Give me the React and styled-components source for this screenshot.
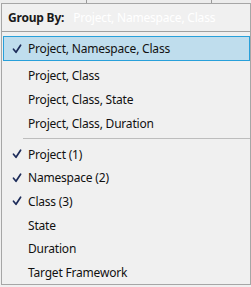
import styled, { createGlobalStyle } from "styled-components";

const GlobalStyle = createGlobalStyle`
  html, body { margin: 0; padding: 0; background: #f0f0f0; }
  body { width: 251px; height: 287px; overflow: hidden; font-family: "Noto Sans", "Open Sans", sans-serif; }
`;

const Page = styled.div`
  width: 251px;
  height: 287px;
  display: flex;
  flex-direction: column;
`;

const Backdrop = styled.div`
  height: 3px;
  display: flex;
  background: #ececec;
`;

const BackCell = styled.div`
  width: ${(p) => p.w}px;
  border-right: 1px solid ${(p) => (p.line ? "#9a9a9a" : "transparent")};
`;

const Popup = styled.div`
  margin-left: 1px;
  width: 250px;
  height: 282px;
  box-sizing: border-box;
  border: 1px solid #a6a6a6;
  background: #f0f0f0;
  display: flex;
  flex-direction: column;
  letter-spacing: -0.2px;
`;

const Header = styled.div`
  height: 28px;
  display: flex;
  align-items: center;
  padding-left: 6px;
  gap: 9px;
  border-bottom: 1px solid #a0a0a0;
  font-size: 12px;
`;

const Label = styled.span`
  font-weight: 700;
  color: #1a1a1a;
`;

const Search = styled.input`
  border: none;
  outline: none;
  background: transparent;
  font: inherit;
  font-size: 12px;
  letter-spacing: -0.2px;
  width: 160px;
  padding: 0;
  &::placeholder { color: #ffffff; opacity: 1; }
`;

const List = styled.div`
  padding-top: 4px;
  display: flex;
  flex-direction: column;
`;

const Item = styled.div`
  height: ${(p) => p.h || 24}px;
  flex-shrink: 0;
  box-sizing: border-box;
  margin: 0 0 ${(p) => (p.active ? 2 : 0)}px 1px;
  display: flex;
  align-items: center;
  font-size: 12px;
  color: #111;
  border: 1px solid ${(p) => (p.active ? "#28a0da" : "transparent")};
  background: ${(p) => (p.active ? "#bfdded" : "transparent")};
`;

const CheckBox = styled.span`
  width: 23px;
  display: flex;
  justify-content: center;
  padding-left: 1px;
`;

const Separator = styled.div`
  height: 1px;
  flex-shrink: 0;
  margin: 3px 0 3px 21px;
  background: #bdbdbd;
`;

const Check = () => (
  <svg width="10" height="10" viewBox="0 0 10 10">
    <path d="M1.5 5.2 L4 8.3 L8.6 1.2" fill="none" stroke="#1d2c5a" strokeWidth="1.7" strokeLinecap="round" strokeLinejoin="round" />
  </svg>
);

const groupings = [
  { text: "Project, Namespace, Class", checked: true, active: true, h: 25 },
  { text: "Project, Class" },
  { text: "Project, Class, State" },
  { text: "Project, Class, Duration" },
];

const levels = [
  { text: "Project (1)", checked: true },
  { text: "Namespace (2)", checked: true },
  { text: "Class (3)", checked: true },
  { text: "State" },
  { text: "Duration" },
  { text: "Target Framework" },
];

const MenuItem = ({ item, h }) => (
  <Item active={item.active} h={item.h || h}>
    <CheckBox>{item.checked && <Check />}</CheckBox>
    {item.text}
  </Item>
);

export default function App() {
  return (
    <Page>
      <GlobalStyle />
      <Backdrop>
        <BackCell w={87} line />
        <BackCell w={125} line />
        <BackCell w={38} />
      </Backdrop>
      <Popup>
        <Header>
          <Label>Group By:</Label>
          <Search placeholder="Project, Namespace, Class" />
        </Header>
        <List>
          {groupings.map((g) => (
            <MenuItem key={g.text} item={g} />
          ))}
          <Separator />
          {levels.map((l) => (
            <MenuItem key={l.text} item={l} h={23.6} />
          ))}
        </List>
      </Popup>
    </Page>
  );
}
